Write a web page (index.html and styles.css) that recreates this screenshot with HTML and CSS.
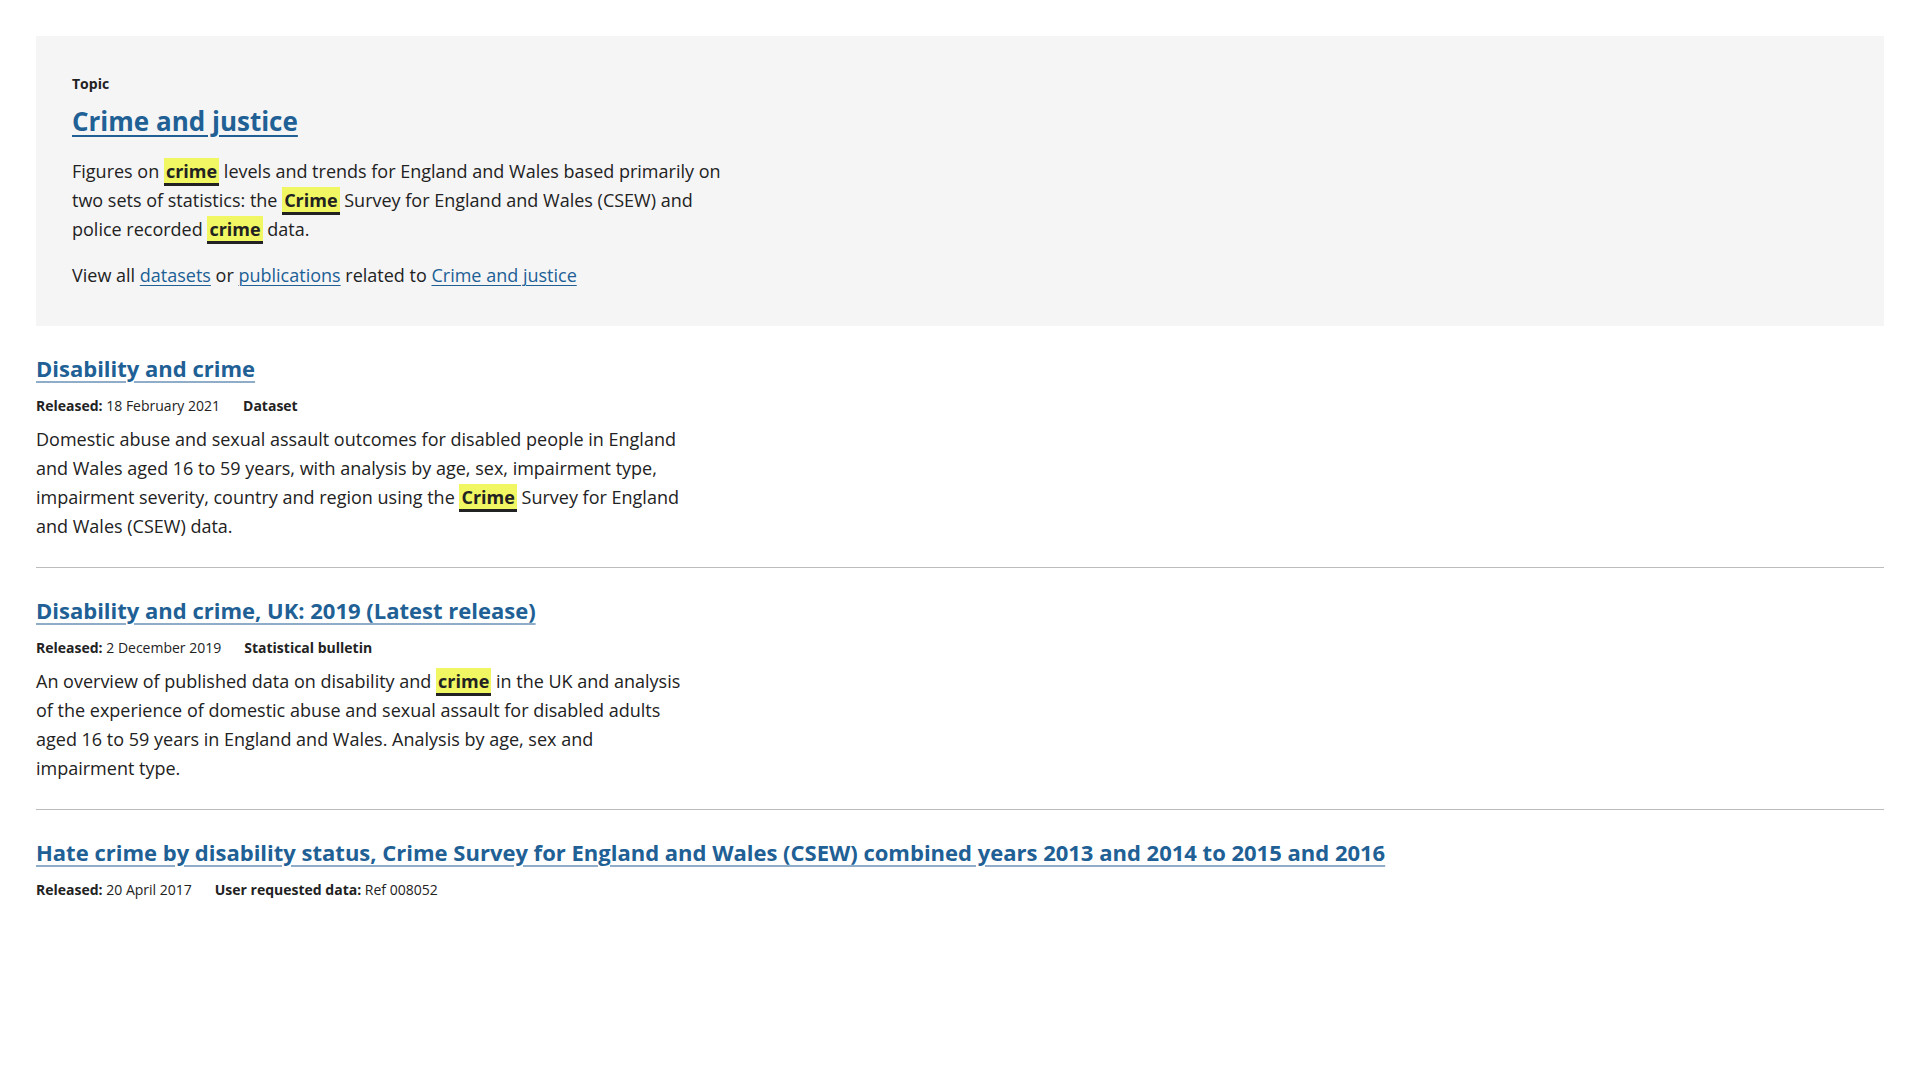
FILE: index.html
```html
<!DOCTYPE html>
<html lang="en">
<head>
<meta charset="utf-8">
<title>Search results</title>
<link rel="stylesheet" href="styles.css">
</head>
<body>
<main class="page">
  <section class="topic">
    <div class="topic-label">Topic</div>
    <h2 class="topic-title"><a href="#">Crime and justice</a></h2>
    <p class="topic-desc">Figures on <mark>crime</mark> levels and trends for England and Wales based primarily on two sets of statistics: the <mark>Crime</mark> Survey for England and Wales (CSEW) and police recorded <mark>crime</mark> data.</p>
    <p class="topic-links">View all <a href="#">datasets</a> or <a href="#">publications</a> related to <a href="#">Crime and justice</a></p>
  </section>

  <ul class="results">
    <li class="result">
      <h3 class="result-title"><a href="#">Disability and crime</a></h3>
      <div class="meta"><span><b>Released:</b> 18 February 2021</span><span><b>Dataset</b></span></div>
      <p class="result-desc">Domestic abuse and sexual assault outcomes for disabled people in England and Wales aged 16 to 59 years, with analysis by age, sex, impairment type, impairment severity, country and region using the <mark>Crime</mark> Survey for England and Wales (CSEW) data.</p>
    </li>
    <li class="result">
      <h3 class="result-title"><a href="#">Disability and crime, UK: 2019 (Latest release)</a></h3>
      <div class="meta"><span><b>Released:</b> 2 December 2019</span><span><b>Statistical bulletin</b></span></div>
      <p class="result-desc">An overview of published data on disability and <mark>crime</mark> in the UK and analysis of the experience of domestic abuse and sexual assault for disabled adults aged 16 to 59 years in England and Wales. Analysis by age, sex and impairment type.</p>
    </li>
    <li class="result">
      <h3 class="result-title"><a href="#">Hate crime by disability status, Crime Survey for England and Wales (CSEW) combined years 2013 and 2014 to 2015 and 2016</a></h3>
      <div class="meta"><span><b>Released:</b> 20 April 2017</span><span><b>User requested data:</b> Ref 008052</span></div>
    </li>
  </ul>
</main>
</body>
</html>
```
FILE: styles.css
```css
* { box-sizing: border-box; }
html, body { margin: 0; padding: 0; background: #fff; }
body {
  font-family: "Open Sans", "Liberation Sans", sans-serif;
  color: #222222;
  font-size: 18px;
  line-height: 1.6;
}
.page {
  padding: 36px 36px 0 36px;
}
a { color: #206095; }
mark {
  background: #f0f762;
  color: #222222;
  font-weight: 700;
  padding: 1px 2px 0;
  border-bottom: 3px solid #222222;
}
.topic {
  background: #f5f5f6;
  padding: 36px 36px 36px 36px;
}
.topic-label {
  font-size: 14px;
  font-weight: 700;
  line-height: 24px;
}
.topic-title {
  margin: 8px 0 19px;
  font-size: 26px;
  font-weight: 700;
  line-height: 34px;
}
.topic-title a {
  text-decoration-thickness: 2px;
  text-underline-offset: 4px;
}
.topic-desc {
  margin: 0 0 17px;
  max-width: 660px;
  line-height: 29px;
}
.topic-links {
  margin: 0;
  line-height: 29px;
}
.topic-links a {
  text-decoration-thickness: 1px;
  text-underline-offset: 3px;
}
.results {
  list-style: none;
  margin: 0;
  padding: 0;
}
.result {
  padding: 27px 0 26px;
  border-bottom: 1px solid #bcbcbd;
}
.result:last-child { border-bottom: none; }
.result-title {
  margin: 0;
  font-size: 22px;
  font-weight: 700;
  line-height: 30px;
}
.result-title a {
  text-decoration-color: #8fadc8;
  text-decoration-thickness: 2px;
  text-underline-offset: 4px;
}
.meta {
  display: flex;
  gap: 23px;
  margin-top: 13px;
  font-size: 14px;
  line-height: 20px;
}
.meta b { font-weight: 700; }
.result-desc {
  margin: 9px 0 0;
  max-width: 660px;
  line-height: 29px;
}
```
